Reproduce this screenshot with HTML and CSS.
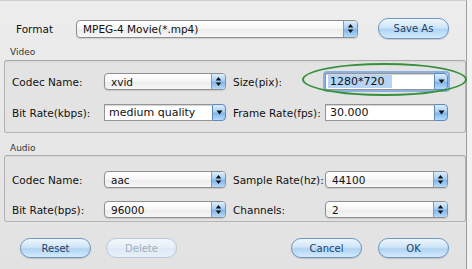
FILE: index.html
```html
<!DOCTYPE html>
<html>
<head>
<meta charset="utf-8">
<link rel="stylesheet" href="styles.css">
</head>
<body>
<div class="win">
  <div class="format-row">
    <span class="lbl fmt-lbl">Format</span>
    <div class="popup w-format"><span class="ptxt fmt-txt">MPEG-4 Movie(*.mp4)</span><span class="arr"><svg width="7" height="11" viewBox="0 0 7 11"><path d="M3.5 1 L6.3 4.4 L0.7 4.4 Z M3.5 10 L6.3 6.6 L0.7 6.6 Z" fill="#111"/></svg></span></div>
    <button class="btn save">Save As</button>
  </div>

  <div class="sec-title">Video</div>
  <div class="group video">
    <span class="lbl">Codec Name:</span>
    <div class="popup"><span class="ptxt">xvid</span><span class="arr"><svg width="7" height="11" viewBox="0 0 7 11"><path d="M3.5 1 L6.3 4.4 L0.7 4.4 Z M3.5 10 L6.3 6.6 L0.7 6.6 Z" fill="#111"/></svg></span></div>
    <span class="lbl lbl2">Size(pix):</span>
    <div class="combo focus"><span class="field"><span class="sel">1280*720</span></span><span class="cbtn"><svg width="7" height="5" viewBox="0 0 7 5"><path d="M0.5 0.5 L6.5 0.5 L3.5 4.5 Z" fill="#111"/></svg></span></div>

    <span class="lbl">Bit Rate(kbps):</span>
    <div class="combo"><span class="field">medium quality</span><span class="cbtn"><svg width="7" height="5" viewBox="0 0 7 5"><path d="M0.5 0.5 L6.5 0.5 L3.5 4.5 Z" fill="#111"/></svg></span></div>
    <span class="lbl lbl2">Frame Rate(fps):</span>
    <div class="combo"><span class="field">30.000</span><span class="cbtn"><svg width="7" height="5" viewBox="0 0 7 5"><path d="M0.5 0.5 L6.5 0.5 L3.5 4.5 Z" fill="#111"/></svg></span></div>
  </div>

  <div class="sec-title audio-title">Audio</div>
  <div class="group audio">
    <span class="lbl">Codec Name:</span>
    <div class="popup"><span class="ptxt">aac</span><span class="arr"><svg width="7" height="11" viewBox="0 0 7 11"><path d="M3.5 1 L6.3 4.4 L0.7 4.4 Z M3.5 10 L6.3 6.6 L0.7 6.6 Z" fill="#111"/></svg></span></div>
    <span class="lbl lbl2">Sample Rate(hz):</span>
    <div class="popup"><span class="ptxt">44100</span><span class="arr"><svg width="7" height="11" viewBox="0 0 7 11"><path d="M3.5 1 L6.3 4.4 L0.7 4.4 Z M3.5 10 L6.3 6.6 L0.7 6.6 Z" fill="#111"/></svg></span></div>

    <span class="lbl">Bit Rate(bps):</span>
    <div class="popup"><span class="ptxt">96000</span><span class="arr"><svg width="7" height="11" viewBox="0 0 7 11"><path d="M3.5 1 L6.3 4.4 L0.7 4.4 Z M3.5 10 L6.3 6.6 L0.7 6.6 Z" fill="#111"/></svg></span></div>
    <span class="lbl lbl2">Channels:</span>
    <div class="popup"><span class="ptxt">2</span><span class="arr"><svg width="7" height="11" viewBox="0 0 7 11"><path d="M3.5 1 L6.3 4.4 L0.7 4.4 Z M3.5 10 L6.3 6.6 L0.7 6.6 Z" fill="#111"/></svg></span></div>
  </div>

  <div class="btn-row">
    <button class="btn">Reset</button>
    <button class="btn disabled">Delete</button>
    <span class="spacer"></span>
    <button class="btn">Cancel</button>
    <button class="btn">OK</button>
  </div>

  <div class="annot-ellipse"></div>
</div>
</body>
</html>
```

FILE: styles.css
```css
html, body {
  margin: 0;
  padding: 0;
}
body {
  width: 472px;
  height: 269px;
  overflow: hidden;
  background: #f2f2f2;
  font-family: "DejaVu Sans", "Liberation Sans", sans-serif;
  font-size: 10.5px;
  color: #111;
}
.win {
  position: relative;
  width: 467px;
  height: 269px;
  box-sizing: border-box;
  border-right: 1px solid #9c9c9c;
  border-top: 1px solid #cfcfcf;
  background: linear-gradient(#ededed, #e6e6e6 60%, #e2e2e2);
  padding-top: 17px;
}
.format-row {
  display: flex;
  align-items: center;
  height: 21px;
}
.fmt-lbl {
  width: 60px;
  padding-left: 16px;
}
.lbl {
  white-space: nowrap;
  color: #111;
}
.w-format {
  width: 282px;
}
.fmt-txt {
  padding-left: 1px;
}
.popup {
  display: flex;
  align-items: center;
  height: 17px;
  box-sizing: border-box;
  border: 1px solid #8e8e8e;
  border-radius: 4px;
  background: linear-gradient(#ffffff, #f6f6f6 50%, #ebebeb 51%, #f7f7f7);
  box-shadow: 0 1px 1px rgba(0, 0, 0, 0.12);
  overflow: hidden;
}
.w-format {
  height: 18px;
}
.ptxt {
  flex: 1;
  padding-left: 6px;
  white-space: nowrap;
}
.arr, .cbtn {
  display: flex;
  align-items: center;
  justify-content: center;
  width: 14px;
  height: 100%;
  box-sizing: border-box;
  background: linear-gradient(#dcedfc, #a9d0f3 45%, #7fb6ea 55%, #b6dafa);
  border-left: 1px solid #7b9cc4;
}
.combo {
  display: flex;
  height: 17px;
  box-sizing: border-box;
}
.field {
  flex: 1;
  display: flex;
  align-items: center;
  padding-left: 4px;
  background: #fff;
  border: 1px solid #959595;
  border-right: none;
  box-shadow: inset 0 1px 1px rgba(0, 0, 0, 0.18);
  white-space: nowrap;
  font-size: 11px;
}
.cbtn {
  border: 1px solid #5f88bb;
  border-radius: 0 4px 4px 0;
}
.focus {
  box-shadow: 0 0 0 2px rgba(110, 160, 225, 0.75);
  border-radius: 2px;
}
.focus .field {
  padding-left: 2px;
}
.sel {
  background: #b6d5f6;
  padding: 0 7px 0 2px;
  line-height: 13px;
}
.btn {
  font-family: "DejaVu Sans", "Liberation Sans", sans-serif;
  font-size: 10px;
  color: #203f6a;
  width: 71px;
  height: 20px;
  padding: 0;
  border: 1px solid #7096c4;
  border-radius: 10px;
  background: linear-gradient(#eef6fd, #cfe5f8 45%, #b0d4f4 55%, #d3eafd);
  box-shadow: 0 1px 1px rgba(0, 0, 0, 0.15);
}
.save {
  margin-left: 20px;
  height: 21px;
}
.btn.disabled {
  color: #a3afbd;
  border-color: #b7c8dc;
  background: linear-gradient(#f4f8fc, #e5eef7 50%, #dce8f4 51%, #e9f1f9);
  box-shadow: none;
}
.sec-title {
  font-size: 9px;
  line-height: 11px;
  color: #333;
  padding-left: 10px;
  margin-top: 8px;
  margin-bottom: 2px;
}
.audio-title {
  margin-top: 10px;
  margin-bottom: 1px;
}
.group {
  margin-left: 4px;
  width: 462px;
  box-sizing: border-box;
  border: 1px solid #b4b4b4;
  border-top-color: #a9a9a9;
  border-radius: 3px;
  background: #e3e3e3;
  box-shadow: inset 0 1px 1px rgba(0, 0, 0, 0.05);
  display: grid;
  grid-template-columns: 92px 122px 99px 123px;
  grid-auto-rows: 17px;
  align-items: center;
  padding-left: 7px;
}
.video {
  padding-top: 12px;
  padding-bottom: 11px;
  row-gap: 14px;
}
.audio {
  padding-top: 15px;
  padding-bottom: 3px;
  row-gap: 13px;
}
.lbl2 {
  padding-left: 7px;
}
.btn-row {
  display: flex;
  align-items: center;
  margin-top: 16px;
  padding-left: 20px;
  gap: 15px;
  width: 449px;
  box-sizing: border-box;
}
.spacer {
  flex: 1;
}
.btn-row .btn:last-child {
  margin-left: 1px;
}
.annot-ellipse {
  position: absolute;
  left: 302px;
  top: 62px;
  width: 165px;
  height: 33px;
  box-sizing: border-box;
  border: 2px solid #35903a;
  border-radius: 50%;
  pointer-events: none;
}
```
